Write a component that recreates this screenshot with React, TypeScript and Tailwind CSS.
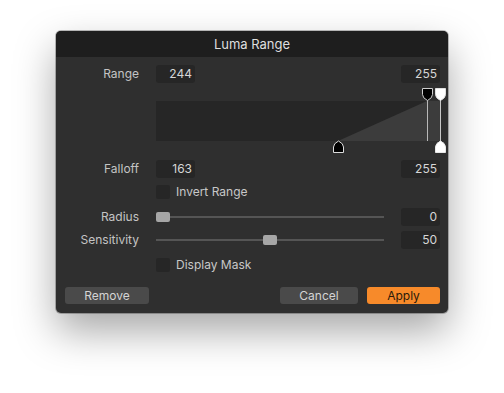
import React from 'react';

const font = { fontFamily: 'Inter, "Noto Sans", sans-serif' };

const NumBox = ({ value, className = '' }: { value: string; className?: string }) => (
  <div className={`h-[18px] w-[39px] rounded-[3px] bg-[#262626] text-right pr-[3px] text-[12px] leading-[18px] text-[#d6d6d6] ${className}`}>
    {value}
  </div>
);

const Label = ({ text }: { text: string }) => (
  <div className="w-[84px] shrink-0 pr-[1px] text-right text-[12px] text-[#c4c4c4]">{text}</div>
);

const Slider = ({ pos }: { pos: number }) => (
  <div className="relative h-[10px] w-[228px]">
    <div className="absolute left-0 right-0 top-[4px] h-[2px] bg-[#555555]" />
    <div
      className="absolute top-0 h-[10px] w-[14px] rounded-[2px] bg-[#a6a6a6]"
      style={{ left: `${pos}px` }}
    />
  </div>
);

const Check = ({ text }: { text: string }) => (
  <div className="flex items-center gap-[6px]">
    <div className="h-[14px] w-[14px] rounded-[2px] bg-[#262626]" />
    <span className="text-[12px] text-[#c8c8c8]">{text}</span>
  </div>
);

const RangeGraph = () => (
  <svg width="290" height="66" viewBox="0 0 290 66" className="block shrink-0">
    <rect x="0" y="13" width="284" height="40" fill="#262626" />
    <polygon points="182,53 271,13 284,13 284,53" fill="#3c3c3c" />
    <line x1="271.5" y1="11" x2="271.5" y2="53" stroke="#b8b8b8" strokeWidth="1" />
    <line x1="284.5" y1="11" x2="284.5" y2="56" stroke="#c8c8c8" strokeWidth="1" />
    <path d="M266.5 0.5 H276.5 V6.5 Q276.5 10 271.5 12.5 Q266.5 10 266.5 6.5 Z" fill="#000" stroke="#cfcfcf" strokeWidth="1" />
    <path d="M279.5 0.5 H289.5 V6.5 Q289.5 10 284.5 12.5 Q279.5 10 279.5 6.5 Z" fill="#fff" stroke="#e0e0e0" strokeWidth="1" />
    <path d="M177.5 64.5 H187.5 V59 Q187.5 55.5 182.5 53 Q177.5 55.5 177.5 59 Z" fill="#000" stroke="#dcdcdc" strokeWidth="1" />
    <path d="M279.5 64.5 H289.5 V59 Q289.5 55.5 284.5 53 Q279.5 55.5 279.5 59 Z" fill="#fff" stroke="#e8e8e8" strokeWidth="1" />
  </svg>
);

export default function App() {
  return (
    <div className="h-[393px] w-[504px] bg-white pl-[56px] pt-[31px]" style={font}>
      <div className="flex h-[282px] w-[392px] flex-col overflow-hidden rounded-[5px] bg-[#2f2f2f] shadow-[0_0_0_1px_rgba(0,0,0,0.25),0_18px_40px_rgba(0,0,0,0.35)]">
        <div className="flex h-[26px] shrink-0 items-center justify-center bg-[#1e1e1e] pt-[1px] text-[13px] text-[#dedede]">
          Luma Range
        </div>

        <div className="flex flex-col pr-[8px]">
          <div className="mt-[8px] flex items-center">
            <Label text="Range" />
            <div className="ml-[16px] flex w-[284px] justify-between">
              <NumBox value="244" className="w-[38px]" />
              <NumBox value="255" />
            </div>
          </div>

          <div className="mt-[5px] flex">
            <div className="w-[100px] shrink-0" />
            <RangeGraph />
          </div>

          <div className="mt-[6px] flex items-center">
            <Label text="Falloff" />
            <div className="ml-[16px] flex w-[284px] justify-between">
              <NumBox value="163" className="w-[38px]" />
              <NumBox value="255" />
            </div>
          </div>

          <div className="mt-[5px] flex items-center">
            <div className="w-[100px] shrink-0" />
            <Check text="Invert Range" />
          </div>

          <div className="mt-[7px] flex items-center">
            <Label text="Radius" />
            <div className="ml-[16px] flex w-[284px] items-center justify-between">
              <Slider pos={0} />
              <NumBox value="0" />
            </div>
          </div>

          <div className="mt-[5px] flex items-center">
            <Label text="Sensitivity" />
            <div className="ml-[16px] flex w-[284px] items-center justify-between">
              <Slider pos={107} />
              <NumBox value="50" />
            </div>
          </div>

          <div className="mt-[7px] flex items-center">
            <div className="w-[100px] shrink-0" />
            <Check text="Display Mask" />
          </div>
        </div>

        <div className="mt-[13px] flex items-center pl-[9px] pr-[8px]">
          <button className="h-[17px] w-[84px] rounded-[3px] bg-[#4a4a4a] text-[12px] leading-[17px] text-[#d4d4d4]">
            Remove
          </button>
          <div className="flex-1" />
          <button className="h-[17px] w-[78px] rounded-[3px] bg-[#4a4a4a] text-[12px] leading-[17px] text-[#d4d4d4]">
            Cancel
          </button>
          <button className="ml-[9px] h-[17px] w-[73px] rounded-[3px] bg-[#f78a2a] text-[12px] leading-[17px] text-[#2b1a0a]">
            Apply
          </button>
        </div>
      </div>
    </div>
  );
}
